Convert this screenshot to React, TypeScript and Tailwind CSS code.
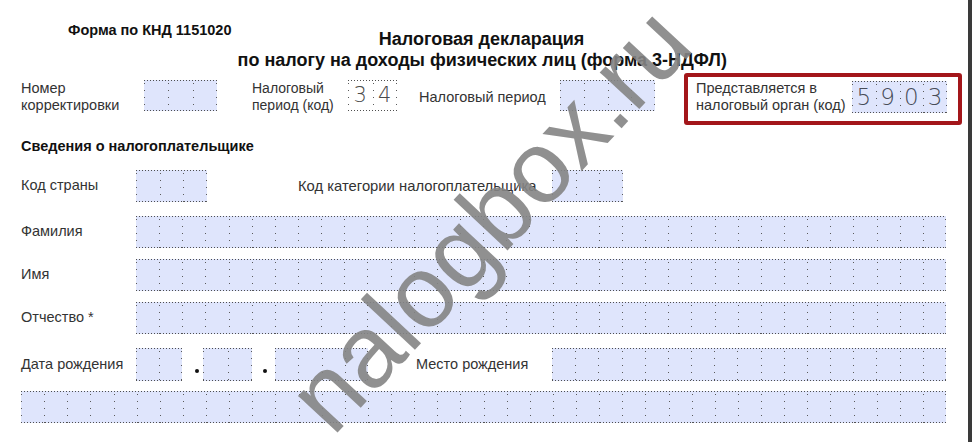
import React from "react";

function Comb({
  n,
  className = "",
  white = false,
  digits,
  big = false,
}: {
  n: number;
  className?: string;
  white?: boolean;
  digits?: string[];
  big?: boolean;
}) {
  return (
    <div
      className={`flex shrink-0 [background-image:linear-gradient(to_right,#4f4f4f_1px,transparent_1px),linear-gradient(to_right,#4f4f4f_1px,transparent_1px),linear-gradient(to_bottom,#5a5a5a_1px,transparent_1px),linear-gradient(to_bottom,#5a5a5a_1px,transparent_1px)] [background-size:3px_1px,3px_1px,1px_7px,1px_7px] [background-position:left_top,left_bottom,left_3px,right_3px] [background-repeat:repeat-x,repeat-x,repeat-y,repeat-y] ${
        white ? "bg-white" : "bg-[#dfe5fc]"
      } ${className}`}
    >
      {Array.from({ length: n }).map((_, i) => (
        <div
          key={i}
          className={`flex flex-1 items-center justify-center ${
            i > 0
              ? "[background-image:linear-gradient(to_bottom,#5a5a5a_1px,transparent_1px)] [background-size:1px_7px] [background-position:left_3px] [background-repeat:repeat-y]"
              : ""
          }`}
        >
          {digits && (
            <span
              className={`font-['DejaVu_Sans',sans-serif] font-extralight leading-none ${
                big ? "text-[23px] text-[#474c58]" : "text-[21px] text-[#4a4a4a]"
              }`}
            >
              {digits[i]}
            </span>
          )}
        </div>
      ))}
    </div>
  );
}

export default function App() {
  return (
    <div className="flex h-[442px] w-[972px] overflow-hidden bg-white font-['Liberation_Sans',Arial,sans-serif] text-[#333]">
      <div className="relative flex-1">
        {/* Header */}
        <div className="flex items-start">
          <div className="ml-[68px] mt-[22px] whitespace-nowrap text-[14.5px] font-bold leading-[17px] text-[#111]">
            Форма по КНД 1151020
          </div>
          <div className="ml-[6px] mt-[29px] w-[488px] whitespace-nowrap text-center text-[18px] font-bold leading-[21px] text-[#111]">
            Налоговая декларация
            <br />
            по налогу на доходы физических лиц (форма 3-НДФЛ)
          </div>
        </div>

        {/* Row 1 */}
        <div className="mt-[2px] flex items-start">
          <div className="ml-[21px] mt-[7px] w-[123px] text-[14.5px] leading-[17px]">
            Номер
            <br />
            корректировки
          </div>
          <Comb n={3} className="mt-[7px] h-[31px] w-[73px]" />
          <div className="ml-[35px] mt-[7px] w-[96px] text-[14px] leading-[17px]">
            Налоговый
            <br />
            период (код)
          </div>
          <Comb n={2} white digits={["3", "4"]} className="mt-[7px] h-[31px] w-[49px]" />
          <div className="ml-[22px] flex h-[45px] w-[141px] items-center pt-[3px] text-[14.5px] leading-[17px]">
            Налоговый период
          </div>
          <Comb n={4} className="mt-[7px] h-[31px] w-[95px]" />
          <div className="ml-[29px] flex h-[52px] w-[278px] items-start rounded-[3px] border-[4px] border-[#a3161a] pl-[8px]">
            <div className="mt-[3px] w-[156px] text-[14.5px] leading-[17px]">
              Представляется в
              <br />
              налоговый орган (код)
            </div>
            <Comb
              n={4}
              big
              digits={["5", "9", "0", "3"]}
              className="mt-[4px] h-[32px] w-[95px]"
            />
          </div>
        </div>

        {/* Section heading */}
        <div className="ml-[21px] mt-[13px] text-[14.5px] font-bold leading-[17px] text-[#111]">
          Сведения о налогоплательщике
        </div>

        {/* Код страны */}
        <div className="mt-[15px] flex h-[32px] items-center">
          <div className="ml-[21px] w-[115px] text-[14.5px]">Код страны</div>
          <Comb n={3} className="h-full w-[71px]" />
          <div className="ml-[91px] w-[254px] whitespace-nowrap text-[14.8px]">
            Код категории налогоплательщика
          </div>
          <Comb n={3} className="h-full w-[71px]" />
        </div>

        {/* Фамилия */}
        <div className="mt-[14px] flex h-[32px] items-center">
          <div className="ml-[21px] w-[115px] text-[14.5px]">Фамилия</div>
          <Comb n={35} className="h-full w-[810px]" />
        </div>

        {/* Имя */}
        <div className="mt-[11px] flex h-[32px] items-center">
          <div className="ml-[21px] w-[115px] text-[14.5px]">Имя</div>
          <Comb n={35} className="h-full w-[810px]" />
        </div>

        {/* Отчество */}
        <div className="mt-[11px] flex h-[32px] items-center">
          <div className="ml-[21px] w-[115px] text-[14.5px]">Отчество *</div>
          <Comb n={35} className="h-full w-[810px]" />
        </div>

        {/* Дата рождения */}
        <div className="mt-[14px] flex h-[33px] items-center">
          <div className="ml-[21px] w-[115px] whitespace-nowrap text-[14.5px]">Дата рождения</div>
          <Comb n={2} className="h-full w-[46px]" />
          <div className="ml-[13px] mt-[12px] h-[4px] w-[4px] rounded-full bg-[#111]" />
          <Comb n={2} className="ml-[4px] h-full w-[49px]" />
          <div className="ml-[11px] mt-[12px] h-[4px] w-[4px] rounded-full bg-[#111]" />
          <Comb n={4} className="ml-[8px] h-full w-[93px]" />
          <div className="ml-[48px] w-[136px] whitespace-nowrap text-[14.5px]">Место рождения</div>
          <Comb n={17} className="h-full w-[394px]" />
        </div>

        {/* Last row */}
        <div className="mt-[10px] flex h-[32px]">
          <Comb n={40} className="ml-[21px] h-full w-[925px]" />
        </div>

        {/* Watermark */}
        <div className="pointer-events-none absolute left-[489px] top-[219px] -translate-x-1/2 -translate-y-1/2 -rotate-[47deg] whitespace-nowrap text-[102px] leading-none text-[#858585] opacity-90">
          nalogbox.ru
        </div>
      </div>
      <div className="w-[4px] shrink-0 bg-[#3a3a3a]" />
    </div>
  );
}
